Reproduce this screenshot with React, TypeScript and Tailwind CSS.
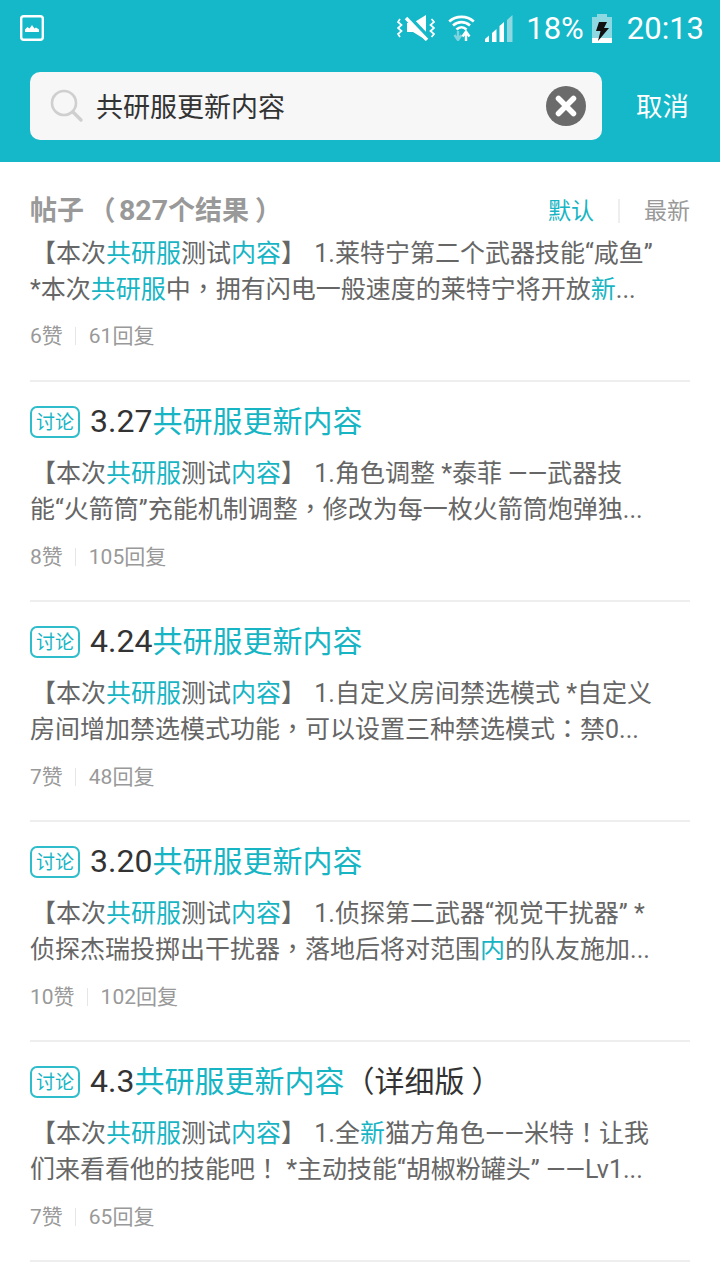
import React from "react";

const FONT = "font-['Roboto','Noto_Sans_CJK_SC',sans-serif]";

type Seg = string | { h: string };

// Full-width punctuation sits centred in its cell, which the TC cut of the font does.
function Punct({ text }: { text: string }) {
  const pieces = text.split(/([，：！（）【】])/);
  return (
    <>
      {pieces.map((p, i) =>
        i % 2 === 1 ? (
          <span
            key={i}
            className={`font-['Noto_Sans_CJK_TC',sans-serif] leading-none ${
              p === "【" ? "ml-[1px]" : p === "】" ? "mr-[2px]" : p === "）" ? "ml-[7px]" : ""
            }`}
          >
            {p}
          </span>
        ) : (
          <span key={i}>{p}</span>
        )
      )}
    </>
  );
}

// Renders a run of text in which { h } pieces take the search highlight colour.
function Rich({ parts }: { parts: Seg[] }) {
  return (
    <>
      {parts.map((p, i) =>
        typeof p === "string" ? (
          <Punct key={i} text={p} />
        ) : (
          <span key={i} className="text-[#17b5c4]">
            {p.h}
          </span>
        )
      )}
    </>
  );
}

function Body({ lines }: { lines: Seg[][] }) {
  return (
    <div className="text-[25px] leading-[36px] text-[#666666]">
      {lines.map((l, i) => (
        <div key={i} className="whitespace-nowrap">
          <Rich parts={l} />
        </div>
      ))}
    </div>
  );
}

function Meta({ likes, replies }: { likes: string; replies: string }) {
  return (
    <div className="flex items-center text-[21px] leading-[28px] text-[#999999]">
      <span>{likes}赞</span>
      <span className="ml-[12px] mr-[13px] h-[18px] w-[1px] bg-[#e6e6e6]" />
      <span>{replies}回复</span>
    </div>
  );
}

type Post = {
  version: string;
  suffix?: string;
  lines: Seg[][];
  likes: string;
  replies: string;
};

const HL_A: Seg[] = ["【本次", { h: "共研服" }, "测试", { h: "内容" }, "】 "];

const posts: Post[] = [
  {
    version: "3.27",
    lines: [
      [...HL_A, "1.角色调整 *泰菲 ——武器技"],
      ["能“火箭筒”充能机制调整，修改为每一枚火箭筒炮弹独..."],
    ],
    likes: "8",
    replies: "105",
  },
  {
    version: "4.24",
    lines: [
      [...HL_A, "1.自定义房间禁选模式 *自定义"],
      ["房间增加禁选模式功能，可以设置三种禁选模式：禁0..."],
    ],
    likes: "7",
    replies: "48",
  },
  {
    version: "3.20",
    lines: [
      [...HL_A, "1.侦探第二武器“视觉干扰器” *"],
      ["侦探杰瑞投掷出干扰器，落地后将对范围", { h: "内" }, "的队友施加..."],
    ],
    likes: "10",
    replies: "102",
  },
  {
    version: "4.3",
    suffix: "（详细版）",
    lines: [
      [...HL_A, "1.全", { h: "新" }, "猫方角色——米特！让我"],
      ["们来看看他的技能吧！ *主动技能“胡椒粉罐头” ——Lv1..."],
    ],
    likes: "7",
    replies: "65",
  },
];

function StatusBar() {
  return (
    <div className="flex h-[56px] items-center justify-between pl-[20px] pr-[16px] text-white">
      {/* gallery notification */}
      <svg width="24" height="26" viewBox="0 0 24 26">
        <rect x="1.2" y="1.2" width="21.6" height="23.6" rx="2.5" fill="none" stroke="#fff" strokeWidth="2.4" />
        <path d="M5 17 L5 14.5 L7.5 12 L9.5 13.6 L12 10 L14.5 13.6 L16 12.5 L19 14.5 L19 17 Z" fill="#fff" />
      </svg>
      <div className="flex items-center">
        {/* vibrate / mute */}
        <svg width="38" height="26" viewBox="0 0 38 26" className="mr-[13px]">
          <path d="M3 4 L1 7 L4.5 10 L1 13 L4.5 16 L1 19 L3 22" fill="none" stroke="#fff" strokeWidth="1.7" />
          <path d="M34.5 4 L37 7 L33.5 10 L37 13 L33.5 16 L37 19 L34.5 22" fill="none" stroke="#fff" strokeWidth="1.7" />
          <path d="M10 8 L16 8 L29 0 L29 25 L16 17 L10 17 Z" fill="#fff" />
          <path d="M12 2 L33 24" stroke="#14b8c8" strokeWidth="4" />
          <path d="M9 3 L30 25" stroke="#fff" strokeWidth="3.4" />
        </svg>
        {/* wifi with traffic arrows */}
        <svg width="27" height="26" viewBox="0 0 27 26" className="mr-[10px]">
          <path d="M1.2 6.5 C8 0.3 19 0.3 25.8 6.5" fill="none" stroke="#fff" strokeWidth="2.6" />
          <path d="M5 10.5 C10 6 17 6 22 10.5" fill="none" stroke="#fff" strokeWidth="2.6" />
          <path d="M8.5 14.5 C11.5 11.5 15.5 11.5 18.5 14.5" fill="none" stroke="#fff" strokeWidth="2.6" />
          <path d="M10 16 L10 23 M6.5 20 L10 25 L13.5 20" fill="none" stroke="#7fd3df" strokeWidth="2.4" />
          <path d="M18 26 L18 18.5 M14.5 21.5 L18 16.5 L21.5 21.5" fill="none" stroke="#fff" strokeWidth="2.4" />
        </svg>
        {/* signal bars */}
        <svg width="28" height="27" viewBox="0 0 28 27" className="mr-[13px]">
          <path d="M0 27 L0 24 L4 20.5 L4 27 Z" fill="#fff" />
          <path d="M7 27 L7 18 L11.5 14 L11.5 27 Z" fill="#fff" />
          <path d="M14.5 27 L14.5 11 L19 7 L19 27 Z" fill="#fff" />
          <path d="M22 27 L22 5 L27.5 0 L27.5 27 Z" fill="#8ed8e2" />
        </svg>
        <span className="text-[31px] leading-none">18%</span>
        {/* charging battery */}
        <svg width="20" height="29" viewBox="0 0 20 29" className="ml-[8px] mr-[15px]">
          <rect x="5" y="0" width="10" height="3" fill="#8ed8e2" />
          <rect x="0" y="3" width="20" height="21" fill="#8ed8e2" />
          <rect x="0" y="24" width="20" height="5" fill="#fff" />
          <path d="M7 8 L15 8 L12 14 L17 14 L6 27 L8.5 17 L4 17 Z" fill="#111" />
        </svg>
        <span className="text-[31px] leading-none">20:13</span>
      </div>
    </div>
  );
}

function SearchRow() {
  return (
    <div className="flex h-[106px] items-start pl-[30px] pt-[16px]">
      <div className="flex h-[68px] w-[572px] items-center rounded-[10px] bg-[#f7f7f8] pl-[20px] pr-[16px]">
        <svg width="34" height="34" viewBox="0 0 34 34" className="mr-[13px] shrink-0">
          <circle cx="14" cy="14" r="12" fill="none" stroke="#cfcfcf" strokeWidth="2.6" />
          <path d="M23 23 L31 31" stroke="#cfcfcf" strokeWidth="3.4" strokeLinecap="round" />
        </svg>
        <span className="-ml-[1px] mt-[4px] flex-1 text-[27px] leading-none text-[#333333]">共研服更新内容</span>
        <svg width="40" height="40" viewBox="0 0 40 40" className="shrink-0">
          <circle cx="20" cy="20" r="20" fill="#6b6b6b" />
          <path d="M12.5 12.5 L27.5 27.5 M27.5 12.5 L12.5 27.5" stroke="#fff" strokeWidth="5.5" strokeLinecap="round" />
        </svg>
      </div>
      <span className="ml-[34px] mt-[20px] text-[26.5px] leading-[30px] text-white">取消</span>
    </div>
  );
}

function PostRow({ post }: { post: Post }) {
  return (
    <div className="flex h-[220px] flex-col border-b-[2px] border-[#eeeeee]">
      <div className="mt-[20px] flex h-[40px] items-center">
        <span className="flex h-[32px] w-[50px] items-center justify-center rounded-[7px] border-[2px] border-[#2fbdcb] text-[19px] leading-none text-[#17b5c4]">
          讨论
        </span>
        <span className="ml-[10px] whitespace-nowrap text-[30px] leading-[40px] text-[#333333]">
          <span className="text-[32px] leading-none">{post.version}</span>
          <span className="text-[#17b5c4]">共研服更新内容</span>
          {post.suffix && <Punct text={post.suffix} />}
        </span>
      </div>
      <div className="mt-[14px]">
        <Body lines={post.lines} />
      </div>
      <div className="mt-[15px]">
        <Meta likes={post.likes} replies={post.replies} />
      </div>
    </div>
  );
}

export default function App() {
  return (
    <div className={`h-[1280px] w-[720px] overflow-hidden bg-white ${FONT}`}>
      <div className="h-[162px] bg-[#14b8c8]">
        <StatusBar />
        <SearchRow />
      </div>
      <div className="px-[30px]">
        <div className="mt-[32px] flex h-[34px] items-center justify-between">
          <span className="whitespace-nowrap text-[27px] font-bold leading-[34px] text-[#999999]">
            帖子
            <span className="ml-[4.5px] mr-[3.5px] font-['Noto_Sans_CJK_TC',sans-serif] leading-none">（</span>
            <span className="text-[28.5px] leading-none">827</span>个结果
            <span className="ml-[6px] font-['Noto_Sans_CJK_TC',sans-serif] leading-none">）</span>
          </span>
          <div className="flex items-center text-[23px] leading-none">
            <span className="text-[#17b5c4]">默认</span>
            <span className="mx-[24px] h-[24px] w-[2px] bg-[#eeeeee]" />
            <span className="text-[#999999]">最新</span>
          </div>
        </div>
        <div className="flex h-[154px] flex-col border-b-[2px] border-[#eeeeee] pt-[8px]">
          <Body
            lines={[
              [...HL_A, "1.莱特宁第二个武器技能“咸鱼”"],
              ["*本次", { h: "共研服" }, "中，拥有闪电一般速度的莱特宁将开放", { h: "新" }, "..."],
            ]}
          />
          <div className="mt-[14px]">
            <Meta likes="6" replies="61" />
          </div>
        </div>
        {posts.map((p) => (
          <PostRow key={p.version} post={p} />
        ))}
      </div>
    </div>
  );
}
